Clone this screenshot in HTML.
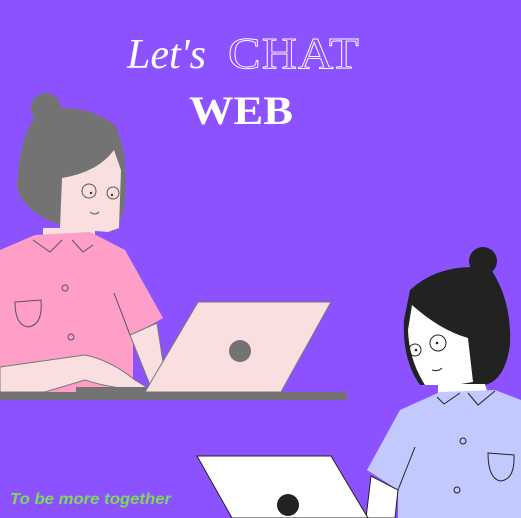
<!DOCTYPE html>
<html><head><style>
html,body{margin:0;padding:0;width:521px;height:518px;overflow:hidden;background:#8c52ff}
svg{display:block}
</style></head><body>
<svg width="521" height="518" viewBox="0 0 521 518" xmlns="http://www.w3.org/2000/svg">
<rect width="521" height="518" fill="#8c52ff"/>
<text x="127" y="68" font-family="Liberation Serif, serif" font-style="italic" font-size="42" fill="#fff">Let's</text>
<text x="228" y="68" font-family="Liberation Serif, serif" font-size="44" fill="none" stroke="#fff" stroke-width="0.9" letter-spacing="1" textLength="132" lengthAdjust="spacingAndGlyphs">CHAT</text>
<text x="189" y="124" font-family="Liberation Serif, serif" font-weight="bold" font-size="40" fill="#fff" textLength="104" lengthAdjust="spacingAndGlyphs">WEB</text>

<!-- left woman -->
<circle cx="46" cy="108" r="15" fill="#737373"/>
<path d="M40 112 Q80 100 115 125 Q128 150 125 200 Q122 228 112 232 L60 225 Q20 210 17 185 Q20 130 40 112Z" fill="#737373"/>
<path d="M62 178 Q98 172 114 150 L121 170 L119 228 L108 232 L60 228Z" fill="#f9dfdf"/>
<circle cx="89" cy="191" r="7" fill="none" stroke="#555" stroke-width="1"/>
<circle cx="113" cy="193" r="6" fill="none" stroke="#555" stroke-width="1"/>
<circle cx="91" cy="193" r="1.2" fill="#333"/><circle cx="112" cy="195" r="1.2" fill="#333"/>
<path d="M90 212 Q95 216 99 212" fill="none" stroke="#555"/>
<path d="M43 228 L95 228 L95 250 L43 250Z" fill="#f9dfdf"/>
<path d="M0 250 L35 235 L90 232 L125 250 L163 318 L133 335 L133 392 L0 392Z" fill="#ff9ec7"/>
<path d="M33 240 L50 252 L62 240 M72 240 L83 252 L93 245" fill="none" stroke="#555"/>
<path d="M15 302 L41 300 Q43 325 28 327 Q15 325 15 302Z" fill="none" stroke="#555"/>
<circle cx="65" cy="288" r="3" fill="none" stroke="#555"/><circle cx="71" cy="337" r="3" fill="none" stroke="#555"/>
<path d="M114 293 L130 335" stroke="#555" fill="none"/>
<path d="M130 335 L157 323 L163 362 L150 385 Z" fill="#f9dfdf" stroke="#777"/>
<path d="M0 367 L85 355 Q110 360 135 380 L148 388 L120 388 Q100 385 85 380 L45 392 L0 392Z" fill="#f9dfdf" stroke="#777"/>
<path d="M198 302 L331 302 L281 392 L145 392Z" fill="#f9dfdf" stroke="#777"/>
<circle cx="240" cy="351" r="11" fill="#737373"/>
<rect x="76" y="387" width="70" height="6" fill="#737373"/>
<rect x="0" y="392" width="347" height="8" fill="#737373"/>

<!-- right woman -->
<circle cx="483" cy="261" r="14" fill="#222"/>
<path d="M410 290 Q440 262 490 268 Q512 300 510 345 Q505 380 485 385 L420 385 Q402 360 404 320 Z" fill="#222"/>
<path d="M412 305 Q440 330 468 338 L473 382 L455 385 L425 385 Q409 360 408 330Z" fill="#fff"/>
<circle cx="415" cy="350" r="6" fill="none" stroke="#222"/><circle cx="438" cy="343" r="8" fill="none" stroke="#222"/>
<circle cx="416" cy="350" r="1.3" fill="#222"/><circle cx="437" cy="343" r="1.3" fill="#222"/>
<path d="M432 370 Q438 372 442 368" fill="none" stroke="#222"/>
<path d="M438 384 L485 384 L490 400 L438 400Z" fill="#fff"/>
<path d="M367 470 L400 410 L440 392 L495 390 L521 400 L521 518 L398 518 L398 490Z" fill="#c2c9ff"/>
<path d="M437 397 L444 404 L460 393 M468 393 L478 405 L495 391" fill="none" stroke="#222"/>
<path d="M488 453 L514 455 Q515 480 500 481 Q488 478 488 453Z" fill="none" stroke="#222"/>
<circle cx="463" cy="441" r="3" fill="none" stroke="#222"/><circle cx="457" cy="490" r="3" fill="none" stroke="#222"/>
<path d="M415 447 L398 490" fill="none" stroke="#222"/>
<path d="M371 476 L398 490 L395 518 L366 518Z" fill="#fff" stroke="#222"/>
<path d="M197 456 L331 456 L368 518 L232 518Z" fill="#fff" stroke="#222"/>
<circle cx="288" cy="505" r="11" fill="#222"/>

<text x="10" y="504" font-family="Liberation Sans, sans-serif" font-style="italic" font-weight="bold" font-size="16" fill="#7ed957" textLength="161" lengthAdjust="spacingAndGlyphs">To be more together</text>
</svg>
</body></html>
